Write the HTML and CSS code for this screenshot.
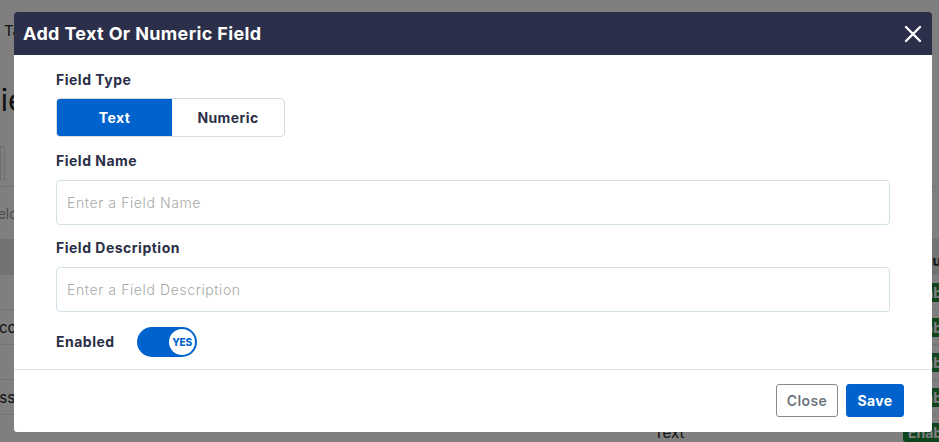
FILE: index.html
```html
<!DOCTYPE html>
<html>
<head>
<meta charset="utf-8">
<link rel="stylesheet" href="styles.css">
</head>
<body>
<div class="page">
  <div class="topbar"><span class="tab">Tags</span></div>
  <div class="pagehead"><h1 class="ptitle">Fields</h1></div>
  <div class="toolbar"><div class="tbox"></div></div>
  <div class="searchrow"><span class="search">Fields</span></div>
  <div class="thead"><span></span><span class="th-r">Status</span></div>
  <div class="row"><span class="c1"></span><span class="badge">Enabled</span></div>
  <div class="row"><span class="c1 acc">Account</span><span class="badge">Enabled</span></div>
  <div class="row"><span class="c1"></span><span class="badge">Enabled</span></div>
  <div class="row"><span class="c1 ses">Session</span><span class="badge">Enabled</span></div>
  <div class="row"><span class="c1 mid">Text</span><span class="badge">Enabled</span></div>
</div>
<div class="overlay"></div>
<div class="modal">
  <div class="mhead">
    <h2 class="mtitle">Add Text Or Numeric Field</h2>
    <svg class="xicon" viewBox="0 0 18 18" width="18" height="18"><path d="M2 2L16 16M16 2L2 16" stroke="#fff" stroke-width="2.4" stroke-linecap="round" fill="none"/></svg>
  </div>
  <div class="mbody">
    <label class="lbl">Field Type</label>
    <div class="seg">
      <span class="segbtn active">Text</span>
      <span class="segbtn">Numeric</span>
    </div>
    <label class="lbl">Field Name</label>
    <input class="inp" placeholder="Enter a Field Name">
    <label class="lbl">Field Description</label>
    <input class="inp" placeholder="Enter a Field Description">
    <div class="enrow">
      <span class="lbl en">Enabled</span>
      <span class="switch"><span class="knob">YES</span></span>
    </div>
  </div>
  <div class="mfoot">
    <button class="btn close">Close</button>
    <button class="btn save">Save</button>
  </div>
</div>
</body>
</html>
```
FILE: styles.css
```css
* { box-sizing: border-box; }
html, body { margin: 0; padding: 0; }
body {
  width: 939px; height: 442px; overflow: hidden;
  font-family: "Inter", "Open Sans", sans-serif;
  background: #fff;
  position: relative;
}
.page { color: #222; }
.topbar { height: 60px; display: flex; align-items: center; padding-left: 4px; font-size: 15px; }
.pagehead { height: 80px; display: flex; align-items: center; }
.ptitle { margin: 0; font-size: 30px; font-weight: 400; margin-left: -17px; }
.toolbar { height: 46px; display: flex; align-items: center; }
.tbox { width: 5px; height: 34px; border: 1px solid #ddd; }
.searchrow { height: 54px; display: flex; align-items: center; border-top: 1px solid #e4e4e4; border-bottom: 1px solid #e4e4e4; color: #999; font-size: 14px; margin-left: -14px; }
.thead { height: 35px; background: #e6e6e6; display: flex; justify-content: space-between; align-items: flex-end; font-weight: 700; font-size: 14px; color: #222; padding-bottom: 6px; }
.th-r { width: 70px; margin-right: -34px; padding-left: 2px; }
.row { height: 35px; border-bottom: 1px solid #e6e6e6; display: flex; justify-content: space-between; align-items: center; font-size: 15px; }
.c1 { margin-left: -8px; }
.c1.acc { margin-left: -20px; }
.c1.ses { margin-left: -19px; }
.c1.mid { margin-left: 654px; }
.badge { width: 70px; background: #1e8a3a; color: #fff; font-size: 14px; font-weight: 700; padding: 1px 5px; border-radius: 3px; margin-right: -34px; }
.overlay { position: absolute; inset: 0; background: rgba(0,0,0,0.5); }
.modal {
  position: absolute; left: 14px; top: 12px; width: 918px; height: 420px;
  background: #fff; border-radius: 3px; overflow: hidden;
  font-family: "Inter", "Open Sans", sans-serif;
}
.mhead {
  height: 43px; background: #2b2f4a; display: flex; align-items: center; justify-content: space-between;
  padding: 0 10px 0 9px;
}
.mtitle { margin: 0; color: #fff; font-size: 18px; font-weight: 700; letter-spacing: 0.35px; }
.xicon { display: block; }
.mbody { padding: 16px 42px 0 42px; display: flex; flex-direction: column; height: 315px; border-bottom: 1px solid #dfe3ea; }
.lbl { font-size: 14px; font-weight: 700; color: #2b2f48; line-height: 18px; letter-spacing: 0.5px; }
.seg { display: flex; width: 229px; height: 39px; border: 1px solid #d5dbe3; border-radius: 4px; overflow: hidden; margin: 9px 0 15px; }
.segbtn { flex: 1; display: flex; align-items: center; justify-content: center; font-size: 14px; font-weight: 700; color: #2b2f48; letter-spacing: 0.4px; }
.segbtn.active { flex: 0 0 115px; background: #0062cc; color: #fff; }
.inp {
  display: block; width: 834px; height: 45px; margin: 10px 0 14px; border: 1px solid #d3e1e8; border-radius: 4px;
  padding: 0 10px; font-family: inherit; font-size: 14px; font-weight: 300; color: #333; outline: none; letter-spacing: 0.6px;
}
.inp::placeholder { color: #a9a9a9; font-weight: 300; }
.enrow { display: flex; align-items: center; margin-top: 1px; }
.en { width: 81px; }
.switch { width: 60px; height: 30px; border-radius: 15px; background: #0062cc; position: relative; display: block; }
.knob {
  position: absolute; right: 2px; top: 2px; width: 26px; height: 26px; border-radius: 50%; background: #fff;
  color: #0062cc; font-size: 10px; font-weight: 800; display: flex; align-items: center; justify-content: center; letter-spacing: -0.2px;
}
.mfoot { display: flex; justify-content: flex-end; gap: 8px; padding: 14px 28px 0 0; }
.btn { font-family: inherit; height: 33px; border-radius: 3px; font-size: 14px; padding: 0; cursor: pointer; letter-spacing: 0.4px; }
.btn.close { background: #fff; border: 1px solid #8a8a8a; color: #6c757d; font-weight: 600; width: 62px; }
.btn.save { background: #0062cc; border: 1px solid #0062cc; color: #fff; font-weight: 700; width: 58px; }
```
